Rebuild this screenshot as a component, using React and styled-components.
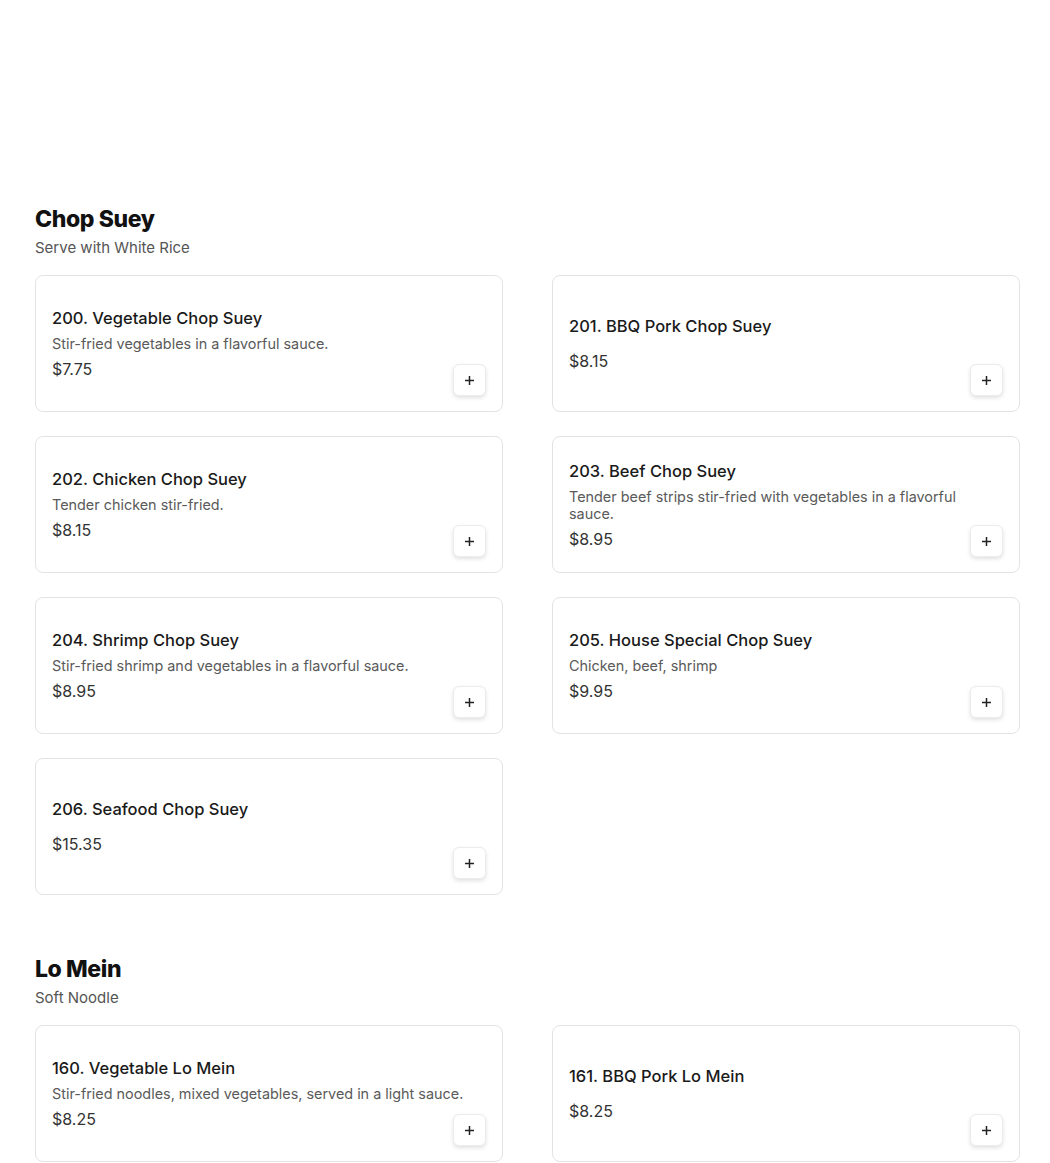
import React from 'react';
import styled, { createGlobalStyle } from 'styled-components';

const GlobalStyle = createGlobalStyle`
  body {
    margin: 0;
    background: #fff;
    font-family: Inter, "Noto Sans", sans-serif;
    color: #222;
  }
`;

const menu = [
  {
    title: 'Chop Suey',
    subtitle: 'Serve with White Rice',
    items: [
      { name: '200. Vegetable Chop Suey', desc: 'Stir-fried vegetables in a flavorful sauce.', price: '$7.75' },
      { name: '201. BBQ Pork Chop Suey', desc: '', price: '$8.15' },
      { name: '202. Chicken Chop Suey', desc: 'Tender chicken stir-fried.', price: '$8.15' },
      { name: '203. Beef Chop Suey', desc: 'Tender beef strips stir-fried with vegetables in a flavorful sauce.', price: '$8.95' },
      { name: '204. Shrimp Chop Suey', desc: 'Stir-fried shrimp and vegetables in a flavorful sauce.', price: '$8.95' },
      { name: '205. House Special Chop Suey', desc: 'Chicken, beef, shrimp', price: '$9.95' },
      { name: '206. Seafood Chop Suey', desc: '', price: '$15.35' },
    ],
  },
  {
    title: 'Lo Mein',
    subtitle: 'Soft Noodle',
    items: [
      { name: '160. Vegetable Lo Mein', desc: 'Stir-fried noodles, mixed vegetables, served in a light sauce.', price: '$8.25' },
      { name: '161. BBQ Pork Lo Mein', desc: '', price: '$8.25' },
    ],
  },
];

const Page = styled.div`
  padding: 203px 30px 40px 35px;
`;

const Section = styled.section`
  margin-bottom: 58px;
`;

const SectionTitle = styled.h2`
  margin: 0;
  font-size: 23px;
  line-height: 32px;
  font-weight: 800;
  color: #111;
  letter-spacing: -0.4px;
`;

const SectionSub = styled.p`
  margin: 3px 0 17px;
  font-size: 15px;
  line-height: 20px;
  color: #555;
`;

const Grid = styled.div`
  display: grid;
  grid-template-columns: 468px 468px;
  column-gap: 49px;
  row-gap: 24px;
`;

const Card = styled.div`
  position: relative;
  box-sizing: border-box;
  height: 137px;
  border: 1px solid #e3e3e3;
  border-radius: 8px;
  padding: 16px;
  display: flex;
  align-items: center;
`;

const Info = styled.div`
  flex: 1;
`;

const Name = styled.div`
  font-size: 16.5px;
  line-height: 24px;
  font-weight: 500;
  color: #1a1a1a;
  margin-bottom: 5px;
`;

const Desc = styled.div`
  min-height: 1px;
  font-size: 14.4px;
  line-height: 17px;
  color: #5a5a5a;
  margin-bottom: 5px;
`;

const Price = styled.div`
  font-size: 16px;
  line-height: 24px;
  color: #333;
`;

const AddButton = styled.button`
  position: absolute;
  right: 16px;
  bottom: 15px;
  width: 33px;
  height: 32px;
  border: 1px solid #ececec;
  border-radius: 6px;
  background: #fff;
  box-shadow: 0 2px 4px rgba(0, 0, 0, 0.12);
  display: flex;
  align-items: center;
  justify-content: center;
  padding: 0;
  cursor: pointer;
`;

const PlusIcon = () => (
  <svg width="11" height="11" viewBox="0 0 11 11">
    <path d="M5.5 1v9M1 5.5h9" stroke="#222" strokeWidth="1.5" />
  </svg>
);

export default function App() {
  return (
    <Page>
      <GlobalStyle />
      {menu.map((sec) => (
        <Section key={sec.title}>
          <SectionTitle>{sec.title}</SectionTitle>
          <SectionSub>{sec.subtitle}</SectionSub>
          <Grid>
            {sec.items.map((it) => (
              <Card key={it.name}>
                <Info>
                  <Name>{it.name}</Name>
                  <Desc>{it.desc}</Desc>
                  <Price>{it.price}</Price>
                </Info>
                <AddButton aria-label="Add">
                  <PlusIcon />
                </AddButton>
              </Card>
            ))}
          </Grid>
        </Section>
      ))}
    </Page>
  );
}
